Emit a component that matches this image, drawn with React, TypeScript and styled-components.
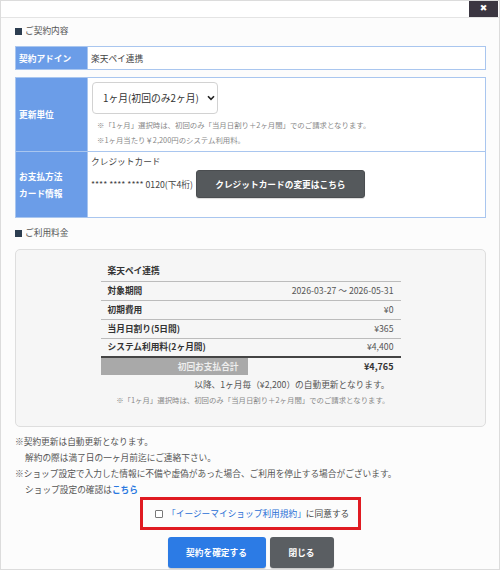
import React from "react";
import styled, { createGlobalStyle } from "styled-components";

const Global = createGlobalStyle`
  html, body { margin: 0; padding: 0; background: #ffffff; }
  body {
    font-family: "Noto Sans CJK JP", "Noto Sans", sans-serif;
    color: #444;
    -webkit-font-smoothing: antialiased;
  }
  * { box-sizing: border-box; }
`;

const Frame = styled.div`
  width: 500px;
  height: 570px;
  border: 1px solid #dcdcdc;
  background: #fcfcfc;
  display: flex;
  flex-direction: column;
  overflow: hidden;
`;

const TopBar = styled.div`
  height: 17px;
  flex: none;
  background: #ffffff;
  border-bottom: 1px solid #e4e4e4;
  display: flex;
  justify-content: flex-end;
  padding-right: 1px;
`;

const CloseButton = styled.button`
  width: 29px;
  height: 17px;
  margin-top: -1px;
  border: none;
  padding: 0;
  background: #3b3641;
  color: #fff;
  font-family: "DejaVu Sans", sans-serif;
  font-size: 9px;
  font-weight: bold;
  line-height: 17px;
  cursor: pointer;
`;

const Body = styled.div`
  padding: 0 13px 0 14px;
  font-size: 8.7px;
`;

const SectionTitle = styled.div<{ $top: number }>`
  margin-top: ${(p) => p.$top}px;
  height: 14px;
  line-height: 14px;
  display: flex;
  align-items: center;
  gap: 3px;
  color: #555;
  font-size: 8.7px;
`;

const Square = styled.span`
  width: 7px;
  height: 7px;
  background: #2c3d50;
  display: inline-block;
`;

const InfoTable = styled.table<{ $top: number }>`
  width: 100%;
  border-collapse: collapse;
  margin-top: ${(p) => p.$top}px;
  background: #fff;
`;

const LabelCell = styled.th<{ $h: number }>`
  width: 72px;
  height: ${(p) => p.$h}px;
  background: #6b9de8;
  color: #fff;
  font-weight: bold;
  text-align: left;
  padding: 0 0 0 3px;
  border: 1px solid #a9c6ef;
  border-right: none;
  font-size: 8.7px;
  line-height: 17px;
`;

const ValueCell = styled.td<{ $pad: string }>`
  border: 1px solid #a9c6ef;
  padding: ${(p) => p.$pad};
  vertical-align: top;
  color: #444;
  line-height: 15px;
`;

const PlainValue = styled.td`
  border: 1px solid #a9c6ef;
  padding: 0 3px;
  color: #444;
`;

const SelectBox = styled.div`
  width: 126px;
  height: 32px;
  border: 1px solid #d2d2d2;
  border-radius: 4px;
  background: #fff;
  display: flex;
  align-items: center;
  justify-content: space-between;
  padding: 0 2px 0 10px;
  font-size: 9.8px;
  color: #333;
`;

const Note = styled.div<{ $indent?: number; $top?: number }>`
  font-size: 7.4px;
  color: #888;
  line-height: 15px;
  padding-left: ${(p) => p.$indent ?? 0}px;
  margin-top: ${(p) => p.$top ?? 0}px;
`;

const CardRow = styled.div`
  display: flex;
  align-items: center;
  margin-top: 1px;
  gap: 3px;
`;

const DarkButton = styled.button<{ $w: number; $h: number }>`
  width: ${(p) => p.$w}px;
  height: ${(p) => p.$h}px;
  background: #55595c;
  border: 1px solid #4a4d50;
  border-radius: 3px;
  color: #fff;
  font-family: inherit;
  font-weight: bold;
  font-size: 8.7px;
  padding: 0;
  box-shadow: 0 1px 1px rgba(0, 0, 0, 0.15);
`;

const FeeBox = styled.div`
  margin-top: 9px;
  height: 178px;
  border: 1px solid #dedede;
  border-radius: 5px;
  background: #f6f6f6;
  padding-top: 12px;
`;

const FeeTable = styled.table`
  width: 300px;
  margin: 0 auto;
  border-collapse: collapse;
`;

const FeeCell = styled.td<{ $right?: boolean; $bold?: boolean; $h?: number; $line?: string }>`
  height: ${(p) => p.$h ?? 19}px;
  padding: 0 7px;
  text-align: ${(p) => (p.$right ? "right" : "left")};
  font-weight: ${(p) => (p.$bold ? "bold" : "normal")};
  color: ${(p) => (p.$bold ? "#333" : "#555")};
  border-bottom: ${(p) => p.$line ?? "1px solid #bcbcbc"};
  line-height: 14px;
`;

const TotalLabel = styled.td`
  width: 147px;
  height: 18px;
  background: #a9a9a9;
  color: #eeeeee;
  font-weight: bold;
  text-align: right;
  padding: 0 9px 0 0;
`;

const TotalValue = styled.td`
  text-align: right;
  font-weight: bold;
  color: #333;
  padding: 0 7px;
  font-size: 9px;
`;

const FeeFooter = styled.div`
  width: 300px;
  margin: 2px auto 0;
  padding-right: 11px;
  text-align: right;
  line-height: 16px;
  color: #555;
`;

const FeeNote = styled.div`
  width: 300px;
  margin: 0 auto;
  padding-right: 11px;
  text-align: right;
  font-size: 7.4px;
  color: #888;
  line-height: 14px;
`;

const Remarks = styled.div`
  margin-top: 7px;
  line-height: 16px;
  color: #555;
`;

const RemarkLine = styled.div<{ $indent?: boolean }>`
  padding-left: ${(p) => (p.$indent ? 10 : 0)}px;
  white-space: nowrap;
`;

const Link = styled.a`
  color: #2a78e0;
  text-decoration: none;
  font-weight: bold;
`;

const AgreeRow = styled.div`
  display: flex;
  justify-content: center;
  margin-top: -1px;
`;

const AgreeBox = styled.label`
  width: 221px;
  height: 33px;
  border: 3px solid #e01b22;
  display: flex;
  align-items: center;
  padding-left: 12px;
  gap: 2px;
  color: #444;
`;

const CheckMark = styled.span`
  width: 8px;
  height: 8px;
  border: 1px solid #777;
  border-radius: 1px;
  background: #fff;
  margin-right: 2px;
`;

const TermsLink = styled.span`
  color: #2a6fd6;
`;

const ButtonRow = styled.div`
  display: flex;
  justify-content: center;
  gap: 4px;
  margin-top: 7px;
`;

const ActionButton = styled.button<{ $w: number; $bg: string }>`
  width: ${(p) => p.$w}px;
  height: 31px;
  background: ${(p) => p.$bg};
  border: none;
  border-radius: 3px;
  color: #fff;
  font-family: inherit;
  font-size: 8.7px;
  font-weight: bold;
  padding: 0;
  box-shadow: 0 1px 1px rgba(0, 0, 0, 0.2);
`;

const Chevron = () => (
  <svg width="8" height="6" viewBox="0 0 8 6">
    <path d="M1 1.2 L4 4.4 L7 1.2" fill="none" stroke="#222" strokeWidth="1.6" />
  </svg>
);

const feeRows: [string, string][] = [
  ["対象期間", "2026-03-27 〜 2026-05-31"],
  ["初期費用", "¥0"],
  ["当月日割り(5日間)", "¥365"],
  ["システム利用料(2ヶ月間)", "¥4,400"],
];

export default function App() {
  return (
    <>
      <Global />
      <Frame>
        <TopBar>
          <CloseButton aria-label="閉じる">✖</CloseButton>
        </TopBar>
        <Body>
          <SectionTitle $top={6}>
            <Square />
            ご契約内容
          </SectionTitle>

          <InfoTable $top={8}>
            <tbody>
              <tr>
                <LabelCell $h={23}>契約アドイン</LabelCell>
                <PlainValue>楽天ペイ連携</PlainValue>
              </tr>
            </tbody>
          </InfoTable>

          <InfoTable $top={7}>
            <tbody>
              <tr>
                <LabelCell $h={74}>更新単位</LabelCell>
                <ValueCell $pad="4px 4px 3px 4px">
                  <SelectBox>
                    <span>1ヶ月(初回のみ2ヶ月)</span>
                    <Chevron />
                  </SelectBox>
                  <Note $indent={5} $top={3}>
                    ※「1ヶ月」選択時は、初回のみ「当月日割り＋2ヶ月間」でのご請求となります。
                  </Note>
                  <Note $indent={5}>※1ヶ月当たり￥2,200円のシステム利用料。</Note>
                </ValueCell>
              </tr>
              <tr>
                <LabelCell $h={66}>
                  お支払方法
                  <br />
                  カード情報
                </LabelCell>
                <ValueCell $pad="2px 3px 18px 3px">
                  <div>クレジットカード</div>
                  <CardRow>
                    <span>**** **** **** 0120(下4桁)</span>
                    <DarkButton $w={169} $h={28}>クレジットカードの変更はこちら</DarkButton>
                  </CardRow>
                </ValueCell>
              </tr>
            </tbody>
          </InfoTable>

          <SectionTitle $top={8}>
            <Square />
            ご利用料金
          </SectionTitle>

          <FeeBox>
            <FeeTable>
              <tbody>
                <tr>
                  <FeeCell $bold colSpan={2}>
                    楽天ペイ連携
                  </FeeCell>
                </tr>
                {feeRows.map(([label, value], i) => (
                  <tr key={label}>
                    <FeeCell $bold $line={i === feeRows.length - 1 ? "2px solid #444" : undefined}>
                      {label}
                    </FeeCell>
                    <FeeCell $right $line={i === feeRows.length - 1 ? "2px solid #444" : undefined}>
                      {value}
                    </FeeCell>
                  </tr>
                ))}
                <tr>
                  <TotalLabel>初回お支払合計</TotalLabel>
                  <TotalValue>¥4,765</TotalValue>
                </tr>
              </tbody>
            </FeeTable>
            <FeeFooter>以降、1ヶ月毎（¥2,200）の自動更新となります。</FeeFooter>
            <FeeNote>※「1ヶ月」選択時は、初回のみ「当月日割り＋2ヶ月間」でのご請求となります。</FeeNote>
          </FeeBox>

          <Remarks>
            <RemarkLine>※契約更新は自動更新となります。</RemarkLine>
            <RemarkLine $indent>解約の際は満了日の一ヶ月前迄にご連絡下さい。</RemarkLine>
            <RemarkLine>
              ※ショップ設定で入力した情報に不備や虚偽があった場合、ご利用を停止する場合がございます。
            </RemarkLine>
            <RemarkLine $indent>
              ショップ設定の確認は<Link href="#">こちら</Link>
            </RemarkLine>
          </Remarks>

          <AgreeRow>
            <AgreeBox>
              <CheckMark />
              <span>
                <TermsLink>「イージーマイショップ利用規約」</TermsLink>に同意する
              </span>
            </AgreeBox>
          </AgreeRow>

          <ButtonRow>
            <ActionButton $w={98} $bg="#2c7be5">契約を確定する</ActionButton>
            <ActionButton $w={64} $bg="#5a5e62">閉じる</ActionButton>
          </ButtonRow>
        </Body>
      </Frame>
    </>
  );
}
